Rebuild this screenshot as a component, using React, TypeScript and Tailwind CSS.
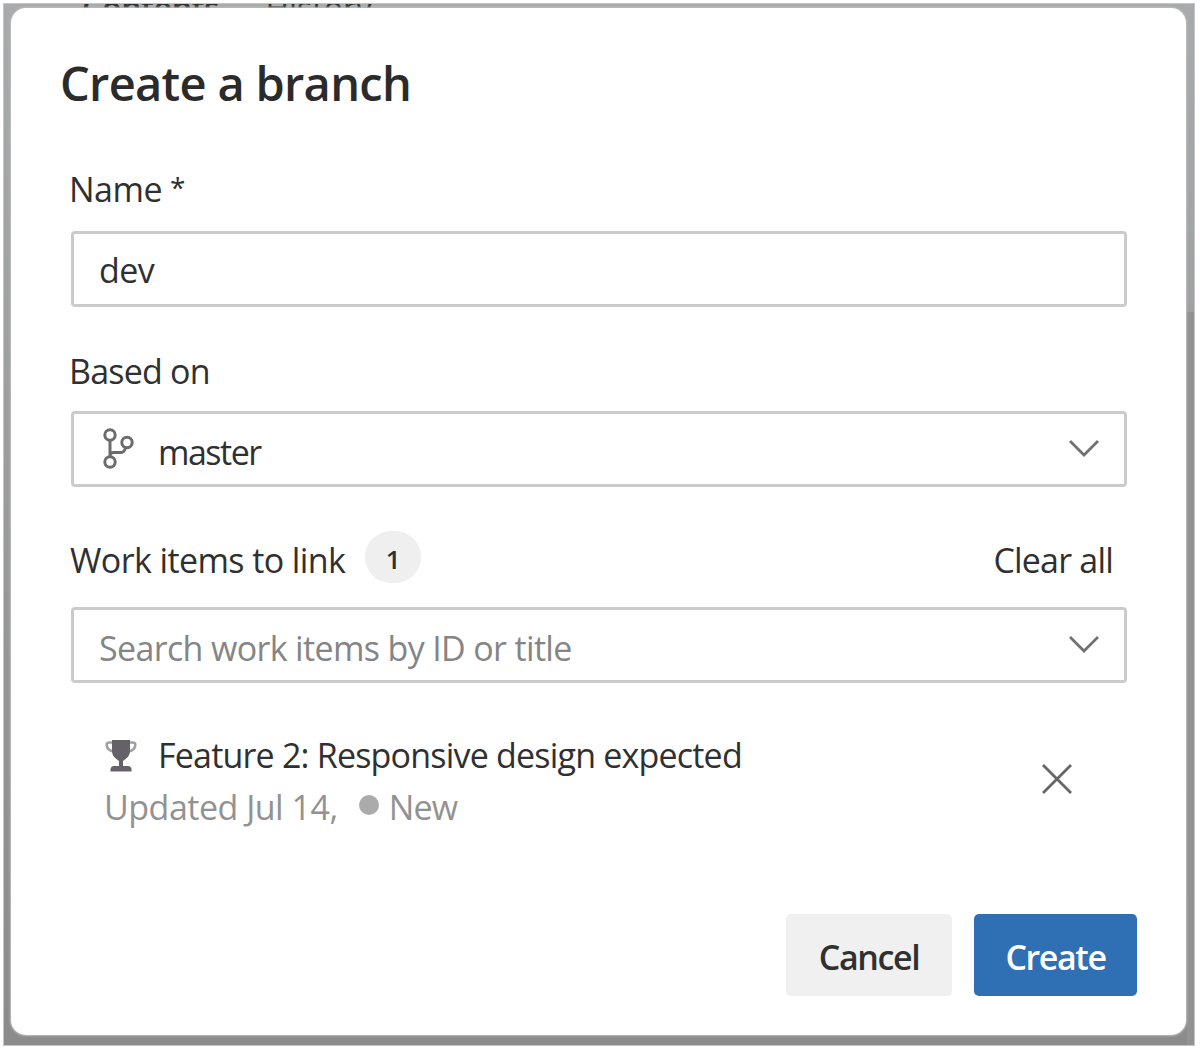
import { ReactNode } from "react";

function Chevron() {
  return (
    <svg width="32" height="20" viewBox="0 0 32 20" fill="none" stroke="#707070" strokeWidth="2.8">
      <path d="M2 2 16 16 30 2" />
    </svg>
  );
}

function BranchIcon() {
  return (
    <svg width="32" height="42" viewBox="0 0 32 42" fill="none" stroke="#6c6c6c" strokeWidth="3">
      <circle cx="8" cy="7" r="5.2" />
      <circle cx="8" cy="34" r="5.2" />
      <circle cx="25" cy="14.5" r="5.2" />
      <path d="M8 12.5V28.500M8 28c0-2 1.500-3.500 3.500-3.500h7.500c2 0 4-2 4.500-4.700" />
    </svg>
  );
}

function Trophy() {
  return (
    <svg width="32" height="34" viewBox="0 0 32 34">
      <path d="M8 3.500H4.500c-2 0-3 1-2.800 2.700.3 3.600 2.800 5.800 7 6.300M24 3.500h3.500c2 0 3 1 2.800 2.700-.3 3.600-2.800 5.800-7 6.300" fill="none" stroke="#a0a0a0" strokeWidth="2.6" />
      <path d="M7 1h18v11c0 5-3.500 7.500-7 10v5h5c2 0 3.500 1.500 3.500 3v2.500h-21V30c0-1.500 1.500-3 3.500-3h5v-5c-3.500-2.500-7-5-7-10z" fill="#646168" />
    </svg>
  );
}

function Field({ children }: { children: ReactNode }) {
  return (
    <div className="flex h-[76px] w-[1056px] items-center rounded-[4px] border-[3px] border-[#cbcbcb] pr-[24px] pl-[26px]">
      {children}
    </div>
  );
}

export default function App() {
  return (
    <div className="h-[1051px] w-[1200px] overflow-hidden bg-white pt-[3px] pl-[3px] font-['Open_Sans',sans-serif] text-[34px] leading-[40px] whitespace-nowrap text-[#303030]">
      <div className="relative h-[1043px] w-[1192px] overflow-hidden border border-[#c4c5c6] bg-linear-to-b from-[#a9aaab] to-[#8b8b8b] pt-[4px] pl-[7px]">
        <div className="absolute top-[-12px] left-[78px] flex h-[32px] gap-[46px] text-[32px] leading-[32px]">
          <span className="font-semibold tracking-[-0.3px]">Contents</span>
          <span>History</span>
        </div>
        <div className="absolute top-[308px] right-0 bottom-0 w-[7px] bg-[#929292]" />
        <main className="relative flex h-[1027px] w-[1175px] flex-col rounded-[15px] bg-white pl-[60px] shadow-[0_0_2px_1px_#bdbdbd]">
          <h1 className="mt-[45px] -ml-[11px] h-[60px] text-[47px] leading-[60px] font-semibold tracking-[-0.7px] text-[#2b2b2b]">
            Create a branch
          </h1>
          <div className="mt-[56px] -ml-[2px] flex h-[40px] gap-[8px]">
            <span className="tracking-[-0.5px]">Name</span>
            <span className="text-[28px] leading-[36px]">*</span>
          </div>
          <div className="mt-[22px]">
            <Field>
              <span className="mt-[2px] -ml-px tracking-[-0.6px]">dev</span>
            </Field>
          </div>
          <span className="mt-[44px] -ml-[2px] h-[40px] tracking-[-0.8px]">Based on</span>
          <div className="mt-[20px]">
            <Field>
              <span className="ml-[2px]"><BranchIcon /></span>
              <span className="mt-[6px] ml-[24px] flex-1 tracking-[-1.5px]">master</span>
              <Chevron />
            </Field>
          </div>
          <div className="mt-[42px] flex h-[56px] w-[1042px] items-center">
            <span className="mt-[6px] -ml-px tracking-[-0.6px]">Work items to link</span>
            <span className="ml-[20px] flex h-[52px] w-[56px] items-center justify-center rounded-full bg-[#efeff0] pt-[4px] text-[26px] leading-[40px] font-semibold">
              1
            </span>
            <span className="mt-[6px] ml-auto tracking-[-0.8px]">Clear all</span>
          </div>
          <div className="mt-[22px]">
            <Field>
              <span className="mt-[6px] -ml-px flex-1 tracking-[-0.65px] text-[#858585]">Search work items by ID or title</span>
              <Chevron />
            </Field>
          </div>
          <div className="mt-[52px] flex h-[92px] w-[1001px] items-center pl-[34px]">
            <div className="flex-1">
              <div className="flex h-[51px] items-start">
                <span className="mt-[4px]"><Trophy /></span>
                <span className="ml-[21px] tracking-[-0.8px]">Feature 2: Responsive design expected</span>
              </div>
              <div className="-ml-px flex h-[41px] items-start pt-px text-[#929292]">
                <span className="tracking-[-0.5px]">Updated Jul 14,</span>
                <span className="mt-[8px] ml-[21px] size-[20px] rounded-full bg-[#ababab]" />
                <span className="ml-[10px] tracking-[-0.8px]">New</span>
              </div>
            </div>
            <svg className="-mt-[4px] -mr-px" width="32" height="32" viewBox="0 0 32 32" stroke="#666" strokeWidth="2.8">
              <path d="M2 2 30 30M30 2 2 30" />
            </svg>
          </div>
          <div className="mt-[87px] flex w-[1066px] justify-end gap-[22px] font-semibold">
            <button className="h-[82px] w-[166px] rounded-[5px] bg-[#f0f0f0] pt-[3px] tracking-[-1.4px]">Cancel</button>
            <button className="h-[82px] w-[163px] rounded-[5px] bg-[#2f70b5] pt-[3px] tracking-[-1.4px] text-white">Create</button>
          </div>
        </main>
      </div>
    </div>
  );
}
